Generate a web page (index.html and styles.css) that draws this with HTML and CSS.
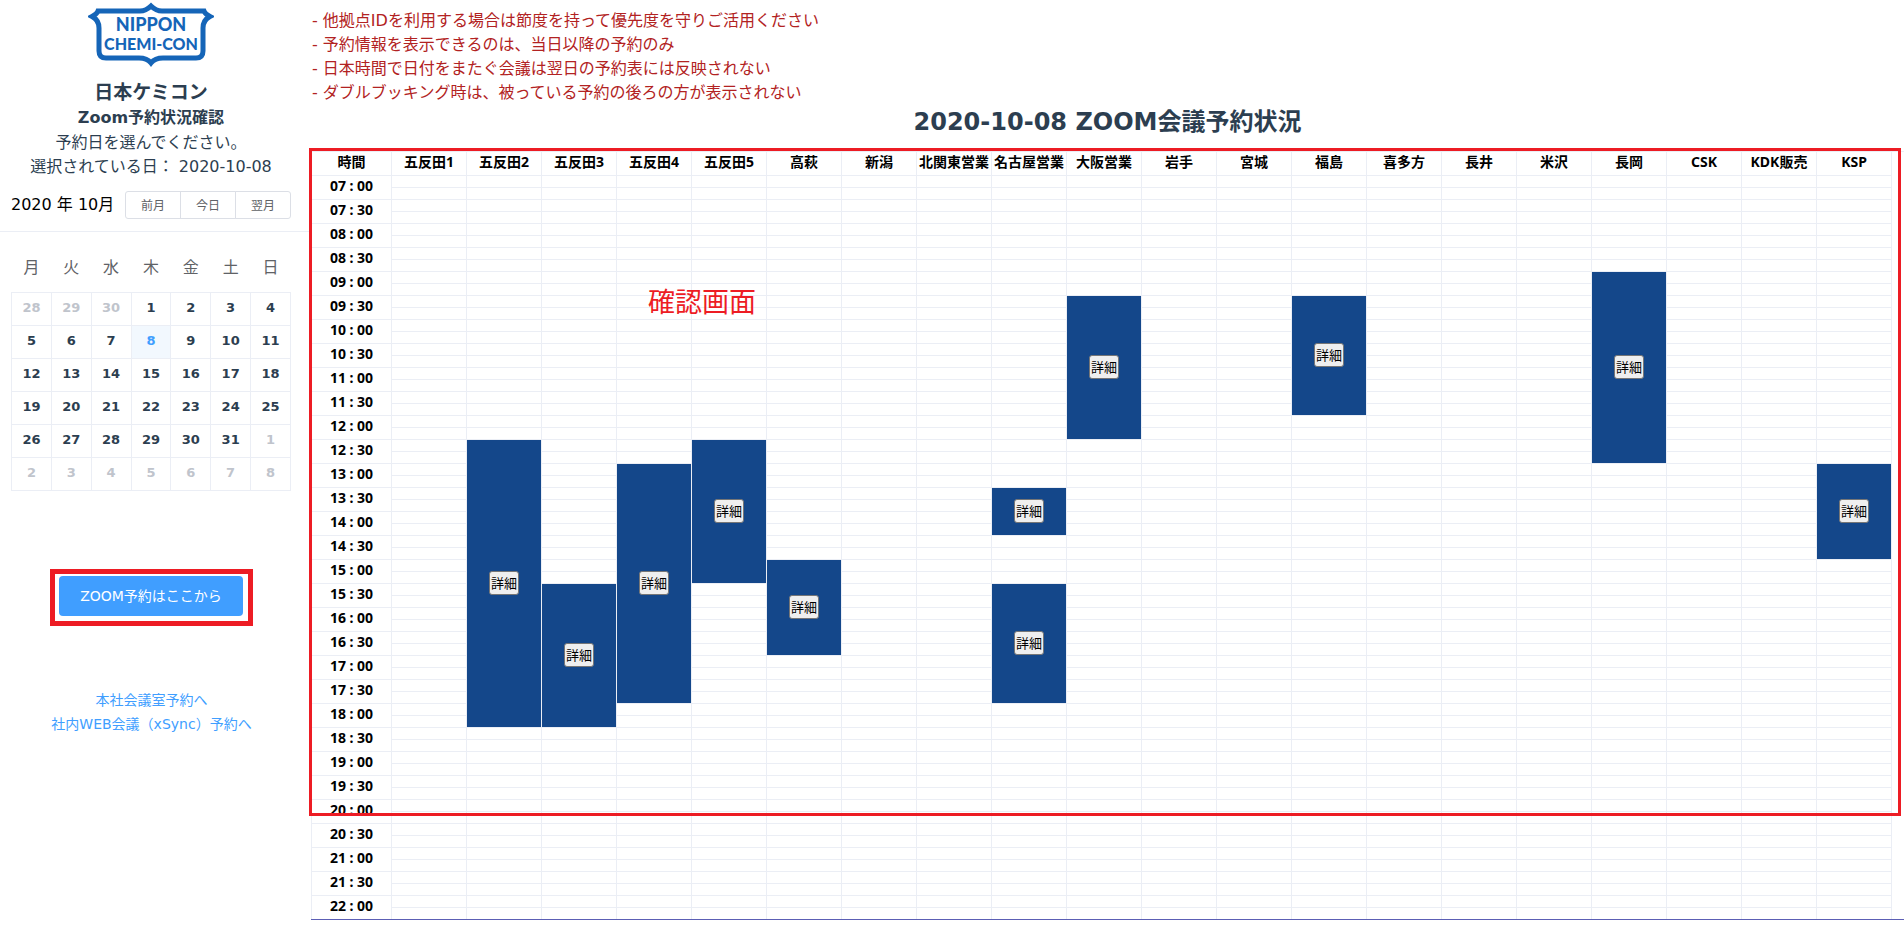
FILE: index.html
```html
<!DOCTYPE html>
<html lang="ja">
<head>
<meta charset="utf-8">
<title>ZOOM会議予約状況</title>
<link rel="stylesheet" href="styles.css">
</head>
<body>
<div class="app">
  <aside class="sidebar">
    <header class="brand">
      <svg class="logo" viewBox="0 0 126 66" role="img" aria-label="NIPPON CHEMI-CON">
        <path class="logo-frame" d="M63 4 Q58 9 52 9 H10 Q9 12 4 14.500 Q11 18 11 26 V49 Q11 56 18 56 H51 Q59 56 63 61 Q67 56 75 56 H108 Q115 56 115 49 V26 Q115 18 122 14.500 Q117 12 116 9 H74 Q68 9 63 4 Z"/>
        <text class="logo-text" x="63" y="29">NIPPON</text>
        <text class="logo-text logo-text-wide" x="63" y="48">CHEMI-CON</text>
      </svg>
      <h1 class="company">日本ケミコン</h1>
      <h2 class="service">Zoom予約状況確認</h2>
      <p class="guide">予約日を選んでください。</p>
      <p class="guide">選択されている日： 2020-10-08</p>
    </header>
    <section class="calendar">
      <div class="calendar-head">
        <span class="month">2020 年 10月</span>
        <div class="month-nav">
          <button type="button">前月</button>
          <button type="button">今日</button>
          <button type="button">翌月</button>
        </div>
      </div>
      <div class="calendar-body">
        <table class="days">
          <thead><tr><th>月</th><th>火</th><th>水</th><th>木</th><th>金</th><th>土</th><th>日</th></tr></thead>
          <tbody>
            <tr><td class="other">28</td><td class="other">29</td><td class="other">30</td><td>1</td><td>2</td><td>3</td><td>4</td></tr>
            <tr><td>5</td><td>6</td><td>7</td><td class="selected">8</td><td>9</td><td>10</td><td>11</td></tr>
            <tr><td>12</td><td>13</td><td>14</td><td>15</td><td>16</td><td>17</td><td>18</td></tr>
            <tr><td>19</td><td>20</td><td>21</td><td>22</td><td>23</td><td>24</td><td>25</td></tr>
            <tr><td>26</td><td>27</td><td>28</td><td>29</td><td>30</td><td>31</td><td class="other">1</td></tr>
            <tr><td class="other">2</td><td class="other">3</td><td class="other">4</td><td class="other">5</td><td class="other">6</td><td class="other">7</td><td class="other">8</td></tr>
          </tbody>
        </table>
      </div>
    </section>
    <nav class="actions">
      <div class="highlight"><button type="button" class="reserve">ZOOM予約はここから</button></div>
      <div class="links">
        <a href="#room">本社会議室予約へ</a>
        <a href="#xsync">社内WEB会議（xSync）予約へ</a>
      </div>
    </nav>
  </aside>
  <main class="main">
    <div class="notes">
      <p>- 他拠点IDを利用する場合は節度を持って優先度を守りご活用ください</p>
      <p>- 予約情報を表示できるのは、当日以降の予約のみ</p>
      <p>- 日本時間で日付をまたぐ会議は翌日の予約表には反映されない</p>
      <p>- ダブルブッキング時は、被っている予約の後ろの方が表示されない</p>
    </div>
    <h2 class="title">2020-10-08 ZOOM会議予約状況</h2>
    <div class="schedule">
      <table class="grid" id="grid"></table>
      <div class="frame"></div>
      <div class="caption">確認画面</div>
    </div>
  </main>
</div>
<script src="app.js"></script>
</body>
</html>
```
FILE: styles.css
```css
* { box-sizing: border-box; }
body {
  margin: 0;
  background: #fff;
  color: #2c3e50;
  font: 16px/24px "DejaVu Sans", "Noto Sans CJK JP", sans-serif;
}
h1, h2, p { margin: 0; }
button { font-family: inherit; cursor: pointer; }

.app { display: grid; grid-template-columns: 311px minmax(0, 1fr); }

.brand {
  display: flex;
  flex-direction: column;
  align-items: center;
  padding: 2px 9px 0 0;
  text-align: center;
}
.logo { width: 126px; height: 66px; margin-bottom: 12px; }
.logo-frame { fill: none; stroke: #1565b8; stroke-width: 5; }
.logo-text { fill: #1565b8; font: 900 18px Lato, sans-serif; text-anchor: middle; }
.logo-text-wide { font-size: 16px; }
.company { font-size: 19px; line-height: 24px; }
.service { font-size: 16px; line-height: 27px; }
.guide { line-height: 24px; }

.calendar-head {
  display: flex;
  justify-content: space-between;
  align-items: center;
  padding: 12px 20px 12px 11px;
  border-bottom: 1px solid #ebeef5;
}
.month { color: #000; white-space: nowrap; }
.month-nav { display: flex; }
.month-nav button {
  width: 56px;
  height: 28px;
  margin-left: -1px;
  padding: 0 0 2px;
  border: 1px solid #dcdfe6;
  background: #fff;
  color: #606266;
  font-size: 12px;
}
.month-nav button:first-child { border-radius: 3px 0 0 3px; }
.month-nav button:last-child { border-radius: 0 3px 3px 0; }

.calendar-body { padding: 12px 20px 0 11px; }
.days { width: 100%; table-layout: fixed; border-collapse: collapse; text-align: center; }
.days th { height: 48px; padding: 0; color: #606266; font-weight: 400; }
.days td {
  height: 33px;
  padding: 0 0 2px;
  border: 1px solid #ebeef5;
  font-size: 13px;
  line-height: 24px;
  font-weight: 700;
}
.days .other { color: #c0c4cc; }
.days .selected { background: #f2f8fe; color: #409eff; }

.actions {
  display: flex;
  flex-direction: column;
  align-items: center;
  gap: 62px;
  padding: 78px 8px 0 0;
}
.highlight { padding: 2px 5px 5px 4px; border: 5px solid #ed1c24; }
.reserve {
  display: block;
  height: 40px;
  padding: 0 21px 2px;
  border: 0;
  border-radius: 4px;
  background: #409eff;
  color: #fff;
  font-size: 14px;
}
.links { display: flex; flex-direction: column; align-items: center; font-size: 14px; }
.links a { color: #409eff; text-decoration: none; white-space: nowrap; }

.notes { padding: 9px 0 0 1px; color: #b22222; }
.title { padding-top: 1px; font-size: 24px; line-height: 32px; text-align: center; }

.schedule {
  position: relative;
  margin-top: 13px;
  padding-right: 12px;
  border-top: 1px solid #ebeef5;
  border-bottom: 1px solid #5c5fb5;
}
.grid {
  width: 100%;
  table-layout: fixed;
  border-collapse: collapse;
  border-top-style: hidden;
  border-bottom-style: hidden;
  color: #000;
  font: 700 14px/20px "Noto Sans", "Noto Sans CJK JP", sans-serif;
  text-align: center;
}
.grid th, .grid td { height: 12px; padding: 0; border: 1px solid #ebeef5; white-space: nowrap; }
.grid th, .grid .booked { padding-bottom: 2px; }
.grid thead th { height: 23px; }
.grid .time-col { width: 80px; }
.grid .booked { padding-bottom: 1px; background: #14478a; }
.detail {
  width: 30px;
  height: 24px;
  padding: 0;
  border: 1px solid #767676;
  border-radius: 3px;
  background: #efefef;
  color: #000;
  font-size: 13px;
  line-height: 20px;
  vertical-align: middle;
}
.frame {
  position: absolute;
  top: -4px;
  right: 3px;
  bottom: 103px;
  left: -2px;
  border: 3px solid #ed1c24;
  pointer-events: none;
}
.caption {
  position: absolute;
  top: 135px;
  left: 337px;
  color: #ed1c24;
  font-size: 27px;
  line-height: 32px;
}
```
FILE: app.js
```js
const rooms = ['五反田1', '五反田2', '五反田3', '五反田4', '五反田5', '高萩', '新潟', '北関東営業',
  '名古屋営業', '大阪営業', '岩手', '宮城', '福島', '喜多方', '長井', '米沢', '長岡', 'CSK', 'KDK販売', 'KSP'];

// [room index, first quarter-hour slot, end slot], slots counted from 07:00
const bookings = [
  [1, 22, 46], [2, 34, 46], [3, 24, 44], [4, 22, 34], [5, 32, 40],
  [8, 26, 30], [8, 34, 44], [9, 10, 22], [12, 10, 20], [16, 8, 24], [19, 24, 32]
];

let html = '<thead><tr><th class="time-col" scope="col">時間</th>' +
  rooms.map(r => `<th scope="col">${r}</th>`).join('') + '</tr></thead><tbody>';
for (let slot = 0; slot < 62; slot++) {
  html += '<tr>';
  if (slot % 2 === 0) {
    const hour = String(7 + Math.floor(slot / 4)).padStart(2, '0');
    html += `<th scope="row" rowspan="2">${hour} : ${slot % 4 ? '30' : '00'}</th>`;
  }
  rooms.forEach((_, room) => {
    const b = bookings.find(([r, from, to]) => r === room && slot >= from && slot < to);
    if (!b) html += '<td></td>';
    else if (b[1] === slot) {
      html += `<td class="booked" rowspan="${b[2] - b[1]}"><button type="button" class="detail">詳細</button></td>`;
    }
  });
  html += '</tr>';
}
document.getElementById('grid').innerHTML = html + '</tbody>';
```
